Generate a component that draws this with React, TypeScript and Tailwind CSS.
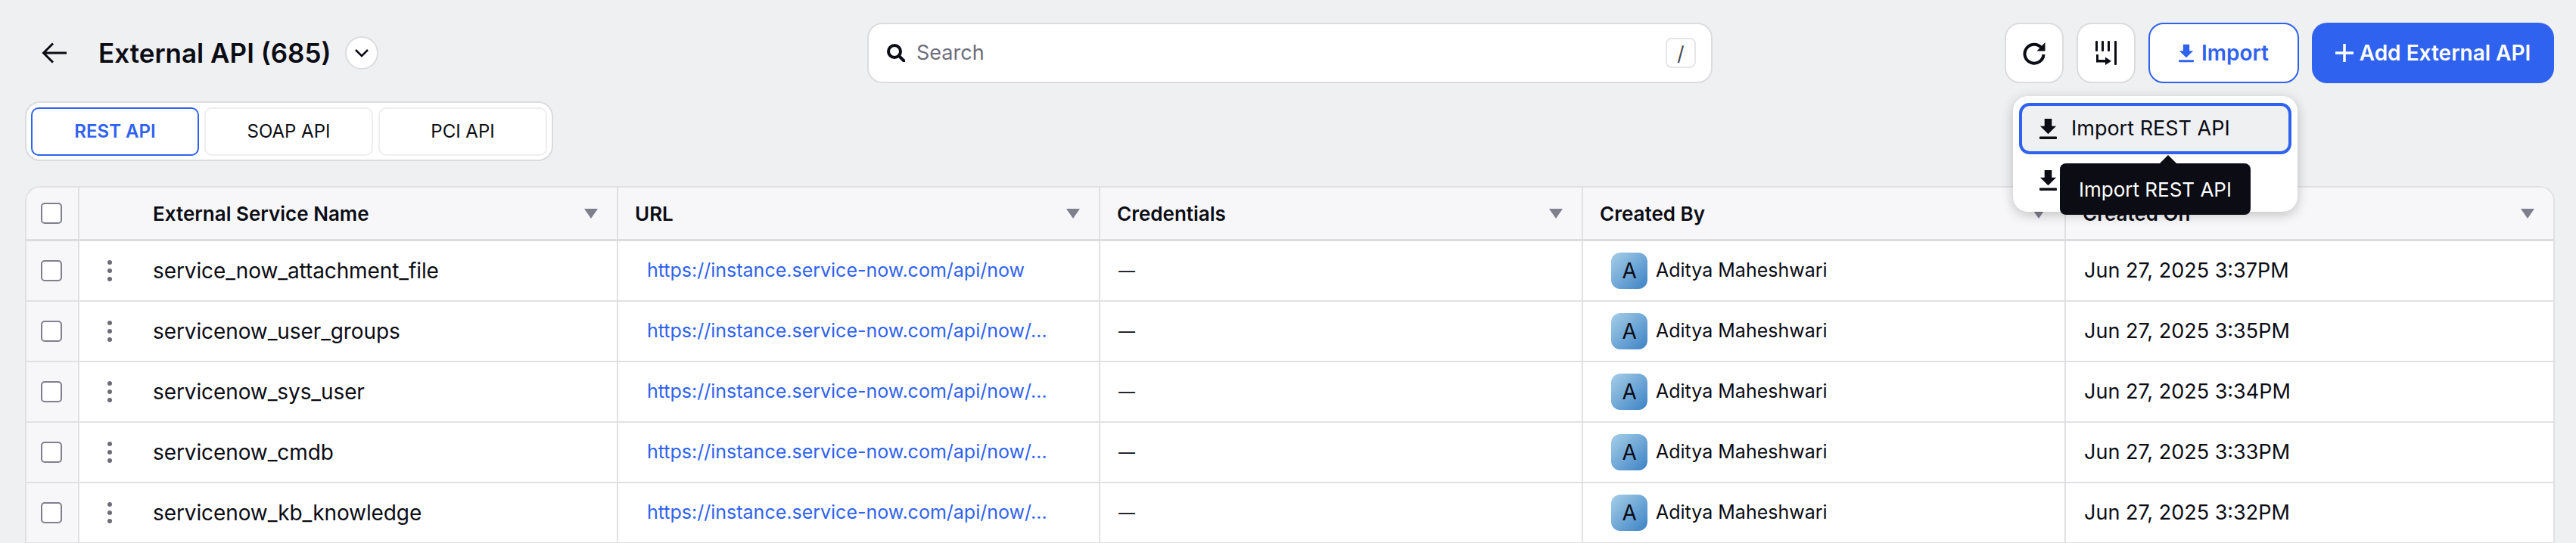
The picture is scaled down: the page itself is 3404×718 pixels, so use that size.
import { ReactNode } from 'react';

const rows = [
  { name: 'service_now_attachment_file', url: 'https://instance.service-now.com/api/now', created: 'Jun 27, 2025 3:37PM' },
  { name: 'servicenow_user_groups', url: 'https://instance.service-now.com/api/now/…', created: 'Jun 27, 2025 3:35PM' },
  { name: 'servicenow_sys_user', url: 'https://instance.service-now.com/api/now/…', created: 'Jun 27, 2025 3:34PM' },
  { name: 'servicenow_cmdb', url: 'https://instance.service-now.com/api/now/…', created: 'Jun 27, 2025 3:33PM' },
  { name: 'servicenow_kb_knowledge', url: 'https://instance.service-now.com/api/now/…', created: 'Jun 27, 2025 3:32PM' },
];

const gridCols = 'grid grid-cols-[68px_712px_637px_638px_638px_646px]';

const DownloadIcon = ({ className }: { className: string }) => (
  <svg viewBox="0 0 24 28" className={className} fill="currentColor">
    <path d="M7 0h10v10h6L12 21 1 10h6z" />
    <rect x="0" y="24.500" width="24" height="3.500" rx="1" />
  </svg>
);

const CheckBox = () => (
  <div className="h-[28px] w-[28px] rounded-[5px] border-2 border-[#7f7f8e] bg-white" />
);

const SortArrow = () => (
  <svg viewBox="0 0 18 13" className="h-[13px] w-[18px] shrink-0 text-[#7f7f8e]" fill="currentColor">
    <path d="M0 0h18L9 13z" />
  </svg>
);

const HeaderCell = ({ children }: { children: ReactNode }) => (
  <div className="flex items-center justify-between border-l-2 border-[#e1e1e4] pl-[22px] pr-[25px] text-[26px] font-semibold text-[#0b0c14]">
    {children}
    <SortArrow />
  </div>
);

const Cell = ({ children }: { children: ReactNode }) => (
  <div className="flex min-w-0 items-center border-l-2 border-[#e1e1e4] px-[24px]">{children}</div>
);

export default function App() {
  return (
    <div
      className="relative h-[718px] w-[3404px] overflow-hidden bg-[#eff0f2] pl-[33px] pr-[28px] pt-[30px] text-[#0b0c14]"
      style={{ fontFamily: 'Inter, "Noto Sans", sans-serif' }}
    >
      {/* top bar */}
      <div className="grid h-[80px] grid-cols-[1fr_1117px_1fr] items-center">
        <div className="flex items-center pl-[22px]">
          <svg viewBox="0 0 34 28" className="h-[28px] w-[34px]" fill="none" stroke="currentColor" strokeWidth="3">
            <path d="M33 14H3M15 1.500 2.500 14 15 26.500" />
          </svg>
          <span className="ml-[41px] text-[35px] font-semibold">External API (685)</span>
          <button className="ml-[18px] flex h-[44px] w-[44px] items-center justify-center rounded-full border-2 border-[#dcdcde] bg-white">
            <svg viewBox="0 0 20 12" className="h-[12px] w-[20px]" fill="none" stroke="currentColor" strokeWidth="2.500">
              <path d="m2 2 8 8 8-8" />
            </svg>
          </button>
        </div>

        <div className="flex h-[80px] items-center rounded-[20px] border-2 border-[#dcdcde] bg-white pl-[24px] pr-[20px]">
          <svg viewBox="0 0 24 24" className="h-[24px] w-[24px]" fill="none" stroke="#0b0c14" strokeWidth="4">
            <circle cx="10" cy="10" r="8" />
            <path d="m16 16 6.500 6.500" strokeLinecap="round" />
          </svg>
          <span className="ml-[15px] text-[27px] text-[#6d6d7a]">Search</span>
          <span className="ml-auto flex h-[40px] w-[40px] items-center justify-center rounded-[8px] border-2 border-[#e6e6e8] text-[26px] text-[#45454f]">/</span>
        </div>

        <div className="flex items-center justify-end gap-[17px] pr-[1px]">
          <button className="flex h-[80px] w-[78px] items-center justify-center rounded-[20px] border-2 border-[#dcdcde] bg-white">
            <svg viewBox="0 0 32 32" className="h-[32px] w-[32px]" fill="none" stroke="#0b0c14" strokeWidth="4">
              <path d="M25.500 9A12.500 12.500 0 1 0 28.500 18" />
              <path d="M30.500 2v11.500H19.500z" fill="#0b0c14" stroke="none" />
            </svg>
          </button>
          <button className="flex h-[80px] w-[78px] items-center justify-center rounded-[20px] border-2 border-[#dcdcde] bg-white">
            <svg viewBox="0 0 28 32" className="h-[32px] w-[28px]" fill="#0b0c14">
              <rect x="0" y="0" width="3" height="14" rx="1" />
              <rect x="8" y="0" width="3" height="14" rx="1" />
              <rect x="16" y="0" width="3" height="14" rx="1" />
              <rect x="25" y="0" width="3" height="32" rx="1" />
              <path d="M1 18h3v7h9v-3.500l8 5.250-8 5.250V28.500H1z" />
            </svg>
          </button>
          <button className="flex h-[80px] w-[199px] items-center justify-center gap-[10px] rounded-[20px] border-2 border-[#2f62ef] bg-white text-[28px] font-semibold text-[#2f62ef]">
            <DownloadIcon className="h-[25px] w-[20px]" />
            Import
          </button>
          <button className="flex h-[80px] w-[320px] items-center justify-center gap-[8px] rounded-[20px] bg-[#2f62ef] text-[28px] font-semibold text-white">
            <svg viewBox="0 0 24 24" className="h-[24px] w-[24px]" fill="none" stroke="currentColor" strokeWidth="3.500">
              <path d="M12 0v24M0 12h24" />
            </svg>
            Add External API
          </button>
        </div>
      </div>

      {/* tabs */}
      <div className="mt-[24px] flex h-[79px] w-[698px] items-center gap-[7px] rounded-[20px] border-2 border-[#dcdcde] bg-white px-[6px]">
        <div className="flex h-[64px] w-[222px] items-center justify-center rounded-[10px] border-2 border-[#2f62ef] text-[24px] font-semibold text-[#2f62ef]">REST API</div>
        <div className="flex h-[64px] w-[223px] items-center justify-center rounded-[10px] border-2 border-[#eeeef0] text-[24px]">SOAP API</div>
        <div className="flex h-[64px] w-[223px] items-center justify-center rounded-[10px] border-2 border-[#eeeef0] text-[24px]">PCI API</div>
      </div>

      {/* table */}
      <div className="mt-[33px] overflow-hidden rounded-t-[20px] border-x-2 border-t-2 border-[#e1e1e4] bg-white">
        <div className={`${gridCols} h-[71px] border-b-[3px] border-[#dcdcde] bg-[#f7f7f9]`}>
          <div className="flex items-center pl-[19px]">
            <CheckBox />
          </div>
          <HeaderCell>
            <span className="pl-[75px]">External Service Name</span>
          </HeaderCell>
          <HeaderCell>URL</HeaderCell>
          <HeaderCell>Credentials</HeaderCell>
          <HeaderCell>Created By</HeaderCell>
          <HeaderCell>Created On</HeaderCell>
        </div>
        {rows.map((row) => (
          <div key={row.name} className={`${gridCols} h-[80px] border-b-2 border-[#e1e1e4] text-[28px] tracking-[-0.1px]`}>
            <div className="flex items-center bg-[#f7f7f9] pl-[19px]">
              <CheckBox />
            </div>
            <div className="flex items-center border-l-2 border-[#e1e1e4]">
              <div className="ml-[37px] flex h-[28px] w-[6px] flex-col justify-between">
                <span className="h-[6px] w-[6px] rounded-full bg-[#6d6d7a]" />
                <span className="h-[6px] w-[6px] rounded-full bg-[#6d6d7a]" />
                <span className="h-[6px] w-[6px] rounded-full bg-[#6d6d7a]" />
              </div>
              <span className="ml-[54px]">{row.name}</span>
            </div>
            <Cell>
              <span className="whitespace-nowrap pl-[14px] text-[25px] tracking-normal text-[#2f62ef]">{row.url}</span>
            </Cell>
            <Cell>
              <span className="text-[22px]">—</span>
            </Cell>
            <Cell>
              <div className="flex items-center gap-[11px] pl-[13px]">
                <div className="flex h-[48px] w-[48px] items-center justify-center rounded-[12px] bg-gradient-to-br from-[#a6cfe8] to-[#3b82c4] text-[28px]">A</div>
                <span className="text-[25px] tracking-normal">Aditya Maheshwari</span>
              </div>
            </Cell>
            <Cell>
              <span className="text-[27px] tracking-normal">{row.created}</span>
            </Cell>
          </div>
        ))}
      </div>

      {/* import menu */}
      <div className="absolute left-[2660px] top-[127px] h-[153px] w-[376px] rounded-[20px] bg-white px-[8px] pt-[9px] shadow-[0_4px_16px_rgba(0,0,0,0.22)]">
        <div className="flex h-[68px] items-center rounded-[14px] border-4 border-[#2f62ef] bg-[#eff0f2] pl-[23px] text-[27px]">
          <DownloadIcon className="h-[27px] w-[23px]" />
          <span className="ml-[19px]">Import REST API</span>
        </div>
        <div className="flex h-[68px] items-center pl-[27px] text-[27px]">
          <DownloadIcon className="h-[27px] w-[23px]" />
          <span className="ml-[19px]">Import SOAP API</span>
        </div>
      </div>

      {/* tooltip */}
      <div className="absolute left-[2722px] top-[216px] flex h-[68px] w-[252px] items-center justify-center rounded-[8px] bg-[#0b0c14] text-[26px] text-white">
        <span className="absolute -top-[11px] left-[132px] h-0 w-0 border-x-[11px] border-b-[11px] border-x-transparent border-b-[#0b0c14]" />
        Import REST API
      </div>
    </div>
  );
}
